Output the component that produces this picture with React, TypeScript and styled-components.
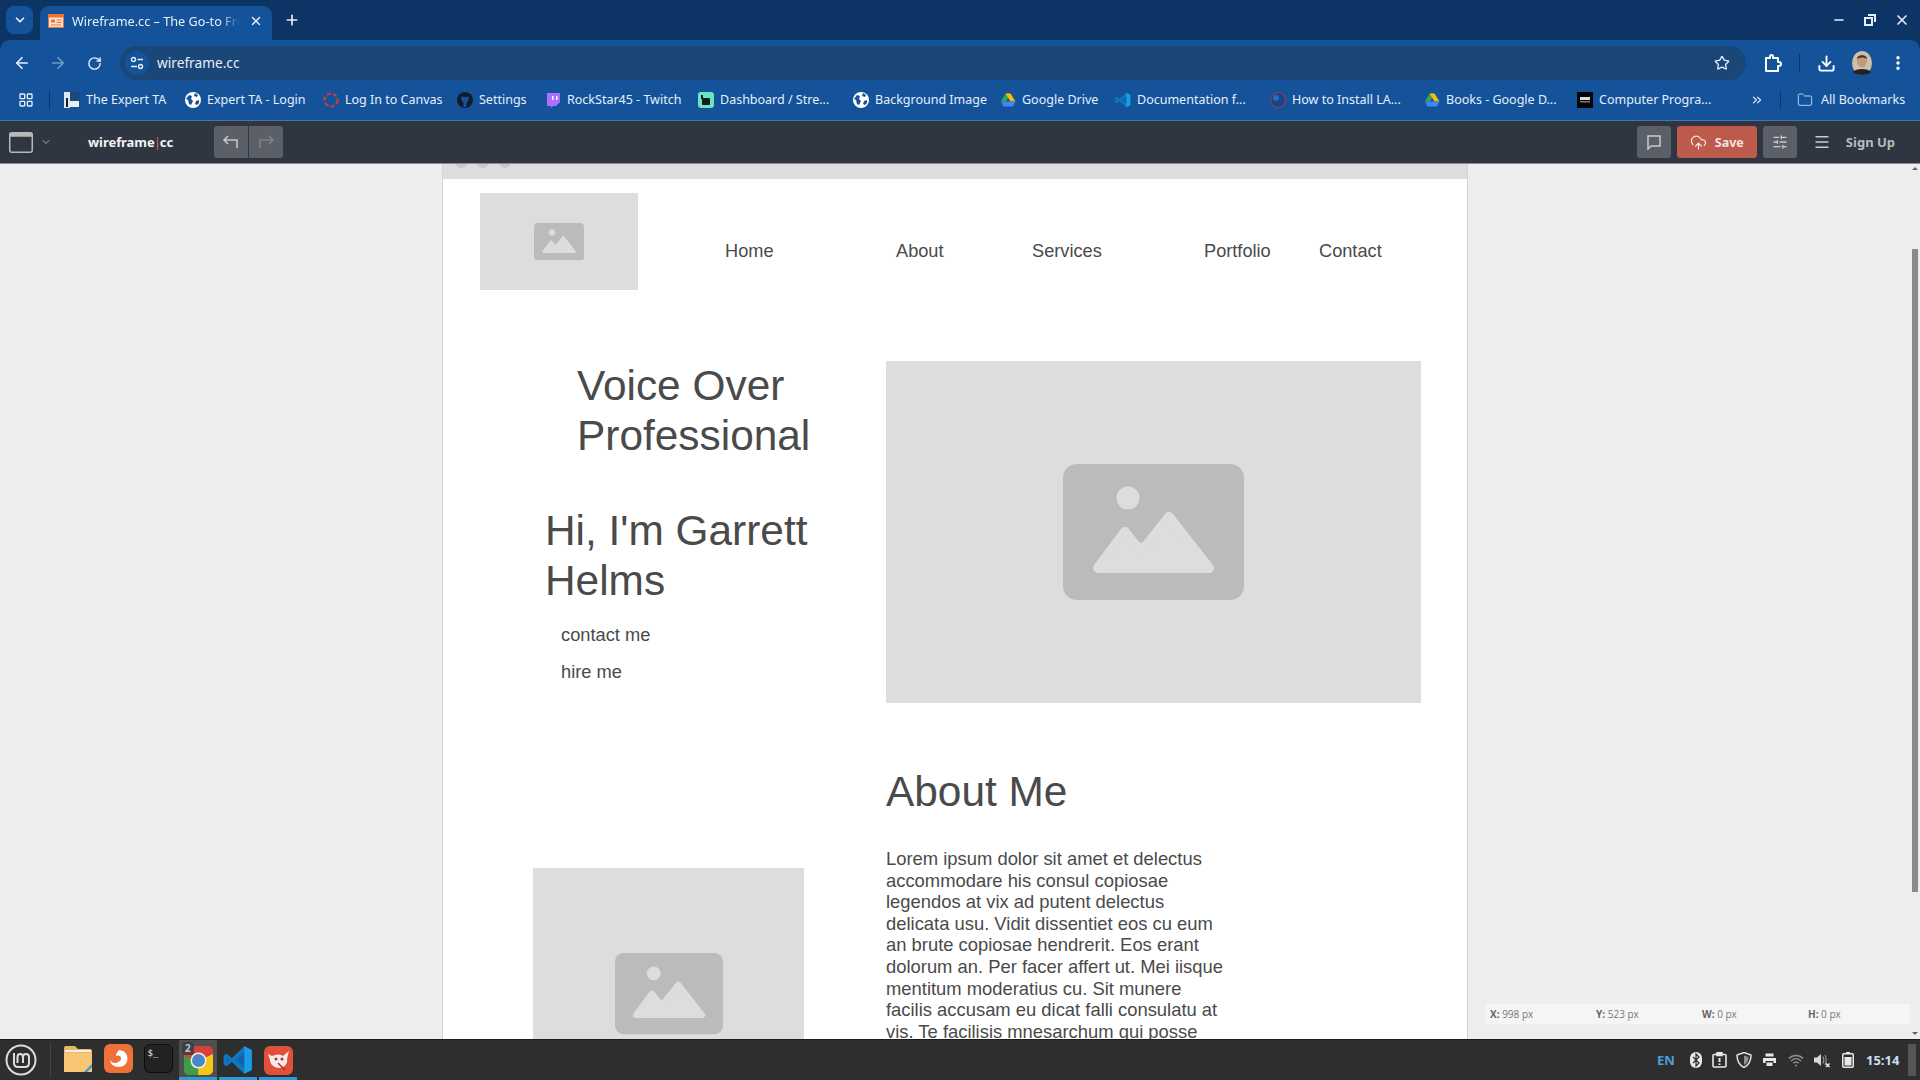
import styled, { createGlobalStyle } from 'styled-components';
import {
  ArrowLeft,
  ArrowRight,
  ChevronDown,
  ChevronsRight,
  CloudUpload,
  Download,
  EllipsisVertical,
  Folder,
  LayoutGrid,
  Menu,
  Minus,
  Plus,
  RotateCw,
  SlidersHorizontal,
  Star,
  X,
} from 'lucide-react';

const GlobalStyle = createGlobalStyle`
  html, body {
    margin: 0;
    padding: 0;
    overflow: hidden;
    background: #ededed;
  }
  * {
    box-sizing: border-box;
  }
`;

const Screen = styled.div`
  width: 1920px;
  height: 1080px;
  display: flex;
  flex-direction: column;
  overflow: hidden;
  font-family: 'Noto Sans', sans-serif;
  background: #0c3566;
`;

/* browser tabs */
const TabStrip = styled.div`
  height: 40px;
  flex: none;
  display: flex;
  align-items: flex-end;
  padding-left: 6px;
  color: #e6eefa;
`;

const TabMenu = styled.div`
  width: 27px;
  height: 28px;
  margin-bottom: 6px;
  border-radius: 8px;
  background: #14539a;
  display: flex;
  align-items: center;
  justify-content: center;
`;

const Tab = styled.div`
  width: 232px;
  height: 34px;
  margin-left: 7px;
  padding: 0 9px 5px 8px;
  border-radius: 9px 9px 0 0;
  background: #14539a;
  display: flex;
  align-items: center;
  font-size: 12.7px;
`;

const TabTitle = styled.span`
  width: 168px;
  margin: 0 auto 0 8px;
  white-space: nowrap;
  overflow: hidden;
  -webkit-mask-image: linear-gradient(to right, #000 88%, transparent);
  mask-image: linear-gradient(to right, #000 88%, transparent);
`;

const NewTab = styled.div`
  margin: 0 0 12px 12px;
  display: flex;
`;

const WindowControls = styled.div`
  margin: 0 10px 12px auto;
  display: flex;
  align-items: center;
  gap: 18px;
`;

/* address bar */
const Toolbar = styled.div`
  height: 40px;
  flex: none;
  display: flex;
  align-items: flex-end;
  background: #14539a;
  border-radius: 10px 10px 0 0;
  color: #e6eefa;
`;

const NavButton = styled.div<{ $dim?: boolean }>`
  width: 36px;
  height: 34px;
  display: flex;
  align-items: center;
  justify-content: center;
  opacity: ${(props) => (props.$dim ? 0.45 : 1)};
`;

const NavGroup = styled.div`
  display: flex;
  padding-left: 4px;
  margin-right: 8px;
`;

const Omnibox = styled.div`
  width: 1626px;
  height: 34px;
  padding: 0 16px 1px 5px;
  border-radius: 17px;
  background: #1b4678;
  display: flex;
  align-items: center;
  font-size: 13.7px;
`;

const SiteInfo = styled.div`
  width: 24px;
  height: 24px;
  margin-right: 8px;
  border-radius: 50%;
  background: #14539a;
  display: flex;
  align-items: center;
  justify-content: center;
`;

const OmniStar = styled.div`
  margin-left: auto;
  display: flex;
`;

const ToolIcons = styled.div`
  height: 34px;
  display: flex;
  align-items: center;
  padding-left: 18px;
`;

const ToolSeparator = styled.div`
  width: 1px;
  height: 18px;
  margin: 0 17px 0 17px;
  background: #0c3566;
`;

const Avatar = styled.svg`
  margin-left: 16px;
  margin-right: 17px;
`;

/* bookmarks */
const BookmarkBar = styled.div`
  height: 41px;
  flex: none;
  display: flex;
  align-items: center;
  padding-bottom: 1px;
  background: #14539a;
  border-bottom: 1px solid #3d78b5;
  color: #e6eefa;
  font-size: 12.5px;
`;

const AppsButton = styled.div`
  width: 49px;
  padding-left: 18px;
  display: flex;
`;

const BarSeparator = styled.div`
  width: 1px;
  height: 18px;
  background: #0c3566;
  flex: none;
`;

const Bookmark = styled.div<{ $width: number }>`
  width: ${(props) => props.$width}px;
  flex: none;
  display: flex;
  align-items: center;
  gap: 6px;
  white-space: nowrap;
  svg {
    flex: none;
  }
`;

const BookmarkStart = styled.div`
  width: 14px;
  flex: none;
`;

const BookmarkMore = styled.div`
  width: 30px;
  margin-left: -7px;
  flex: none;
  display: flex;
`;

const AllBookmarks = styled.div`
  margin-left: 16px;
  display: flex;
  align-items: center;
  gap: 8px;
  white-space: nowrap;
`;

/* wireframe.cc toolbar */
const EditorBar = styled.div`
  height: 43px;
  flex: none;
  display: flex;
  align-items: center;
  background: #2f3541;
  color: #fff;
  padding: 0 25px 0 9px;
  border-bottom: 1px solid #8b8d90;
`;

const WindowIcon = styled.svg`
  flex: none;
`;

const ChevronSlot = styled.div`
  display: flex;
  margin-left: 7px;
  color: #aaa;
`;

const Brand = styled.div`
  width: 126px;
  margin-left: 36px;
  font-weight: 700;
  font-size: 13px;
  letter-spacing: -0.05px;
  color: #f3f3f3;
  i {
    font-style: normal;
    font-weight: 400;
    color: #e2614e;
    margin: 0 -1px;
  }
`;

const HistoryGroup = styled.div`
  display: flex;
  gap: 1px;
  border-radius: 3px;
  overflow: hidden;
`;

const HistoryButton = styled.div<{ $dim?: boolean }>`
  width: 34px;
  height: 32px;
  background: #5b5f68;
  color: ${(props) => (props.$dim ? '#7f838a' : '#c4c6c9')};
  display: flex;
  align-items: center;
  justify-content: center;
`;

const EditorActions = styled.div`
  margin-left: auto;
  display: flex;
  align-items: center;
  gap: 6px;
`;

const SquareButton = styled.div`
  width: 34px;
  height: 32px;
  border-radius: 3px;
  background: #5b5f68;
  color: #c9cbce;
  display: flex;
  align-items: center;
  justify-content: center;
`;

const SaveButton = styled.div`
  width: 80px;
  height: 32px;
  border-radius: 3px;
  background: #bc5a4c;
  color: #f2e3e0;
  font-size: 12.5px;
  font-weight: 700;
  display: flex;
  align-items: center;
  justify-content: center;
  gap: 8px;
`;

const MenuSlot = styled.div`
  display: flex;
  margin: 0 0 0 10px;
  color: #c9cbce;
`;

const SignUp = styled.div`
  margin-left: 9px;
  font-size: 13px;
  font-weight: 700;
  color: #b9bbbe;
`;

/* page area */
const Workspace = styled.div`
  position: relative;
  flex: 1;
  min-height: 0;
  padding-left: 442px;
  background: #ededed;
  overflow: hidden;
`;

const Canvas = styled.div`
  width: 1026px;
  height: 100%;
  background: #fff;
  border-left: 1px solid #d4d4d4;
  border-right: 1px solid #d4d4d4;
  overflow: hidden;
  font-family: 'Liberation Sans', Arial, sans-serif;
  color: #4a4a4a;
`;

const TitleBar = styled.div`
  height: 15px;
  display: flex;
  gap: 10px;
  padding-left: 12px;
  background: #ddd;
  overflow: hidden;
`;

const TitleDot = styled.div`
  width: 12px;
  height: 12px;
  margin-top: -8px;
  border-radius: 50%;
  background: #c8c8c8;
`;

const SiteHeader = styled.div`
  display: flex;
  padding: 14px 0 0 37px;
`;

const SiteNav = styled.nav`
  display: flex;
  align-items: center;
  height: 97px;
  padding: 20px 0 0 87px;
  font-size: 18.2px;
`;

const NavItem = styled.div<{ $width: number }>`
  width: ${(props) => props.$width}px;
`;

const Placeholder = styled.div<{ $width: number; $height: number }>`
  width: ${(props) => props.$width}px;
  height: ${(props) => props.$height}px;
  flex: none;
  background: #ddd;
  display: flex;
  align-items: center;
  justify-content: center;
`;

const Hero = styled.section`
  display: flex;
  margin-top: 71px;
`;

const HeroText = styled.div`
  width: 443px;
  flex: none;
`;

const BigTitle = styled.h1<{ $indent: number; $gap?: number }>`
  margin: ${(props) => props.$gap ?? 0}px 0 0;
  padding-left: ${(props) => props.$indent}px;
  font-size: 42.4px;
  line-height: 50px;
  font-weight: 400;
`;

const HeroLinks = styled.div`
  margin-top: 18px;
  padding-left: 118px;
  font-size: 18.3px;
  line-height: 21px;
  display: flex;
  flex-direction: column;
  gap: 16px;
`;

const About = styled.section`
  display: flex;
  margin-top: 64px;
`;

const AboutPhoto = styled.div`
  width: 443px;
  flex: none;
  padding: 101px 0 0 90px;
`;

const AboutBody = styled.p`
  width: 342px;
  margin: 31px 0 0;
  font-size: 18.4px;
  line-height: 21.6px;
`;

const InfoPanel = styled.div`
  position: absolute;
  left: 1486px;
  top: 840px;
  width: 424px;
  height: 20px;
  padding-left: 4px;
  background: #f5f5f5;
  display: grid;
  grid-template-columns: repeat(4, 106px);
  align-items: center;
  font-family: 'Open Sans', sans-serif;
  font-size: 10px;
  color: #777;
  b {
    font-weight: 700;
    color: #666;
  }
`;

const ScrollThumb = styled.div`
  position: absolute;
  left: 1912px;
  top: 85px;
  width: 6px;
  height: 643px;
  background: #8a8a8a;
`;

const ScrollArrow = styled.div<{ $down?: boolean }>`
  position: absolute;
  left: 1912px;
  ${(props) => (props.$down ? 'bottom: 4px;' : 'top: 3px;')}
  width: 0;
  height: 0;
  border-left: 3.5px solid transparent;
  border-right: 3.5px solid transparent;
  ${(props) => (props.$down ? 'border-top: 3px solid #666;' : 'border-bottom: 3px solid #666;')}
`;

/* desktop panel */
const Taskbar = styled.div`
  height: 41px;
  flex: none;
  display: flex;
  align-items: stretch;
  background: #2e2e2e;
  border-top: 1px solid #1c1c1c;
`;

const MintSlot = styled.div`
  width: 50px;
  padding-left: 5px;
  display: flex;
  align-items: center;
`;

const PanelSeparator = styled.div`
  width: 1px;
  margin: 2px 0;
  background: #444;
`;

const Launchers = styled.div`
  display: flex;
  margin-left: 8px;
  gap: 2px;
`;

const Launcher = styled.div<{ $open?: boolean; $active?: boolean }>`
  position: relative;
  width: 38px;
  display: flex;
  align-items: center;
  justify-content: center;
  background: ${(props) => (props.$active ? '#4f4f4f' : 'transparent')};
  border-bottom: 3px solid ${(props) => (props.$open ? '#2b9ad6' : 'transparent')};
  padding-top: ${(props) => (props.$open ? 3 : 0)}px;
`;

const Badge = styled.span`
  position: absolute;
  left: 3px;
  top: 2px;
  padding: 0 3px;
  border-radius: 3px;
  background: rgba(60, 60, 60, 0.85);
  color: #9fc8ec;
  font-size: 10px;
  font-weight: 700;
  line-height: 13px;
`;

const TerminalIcon = styled.div`
  width: 29px;
  height: 29px;
  border-radius: 6px;
  background: #232323;
  border: 1px solid #0d0d0d;
  color: #eee;
  font-family: 'DejaVu Sans Mono', monospace;
  font-size: 9px;
  line-height: 12px;
  padding: 2px 3px;
`;

const Tray = styled.div`
  margin-left: auto;
  display: flex;
  align-items: center;
  color: #e0e0e0;
`;

const TrayIcon = styled.div<{ $width: number }>`
  width: ${(props) => props.$width}px;
  display: flex;
  justify-content: center;
`;

const TrayLang = styled.div`
  width: 18px;
  margin-right: 9px;
  font-size: 13px;
  font-weight: 700;
  color: #4b9fdc;
`;

const Clock = styled.div`
  width: 42px;
  margin-left: 5px;
  font-size: 13px;
  font-weight: 700;
  color: #c9dff2;
`;

const PanelHandle = styled.div`
  width: 8px;
  height: 32px;
  margin: 0 4px 0 0;
  background: #555;
`;

function ImageIcon({ width }: { width: number }) {
  return (
    <svg width={width} viewBox="0 0 181 136">
      <rect width="181" height="136" rx="14" fill="#bbb" />
      <circle cx="65" cy="34" r="11.5" fill="#ddd" />
      <path
        d="M35 104 L62 68 L73 82 Q78 86 83 82 L106 53 L146 104 Z"
        fill="#ddd"
        stroke="#ddd"
        strokeWidth="10"
        strokeLinejoin="round"
      />
    </svg>
  );
}

function TabIcon() {
  return (
    <svg width="16" height="16" viewBox="0 0 16 16">
      <rect x="0.5" y="1.5" width="15" height="13" fill="#fbe3d2" stroke="#f0703a" />
      <rect x="0.5" y="1.5" width="15" height="3" fill="#f0703a" />
      <rect x="3" y="6.5" width="4" height="3" fill="#f0703a" />
      <rect x="8.5" y="6.5" width="5" height="1" fill="#f0703a" />
      <rect x="8.5" y="9" width="5" height="1" fill="#f0703a" />
      <rect x="3" y="11.5" width="10" height="1" fill="#f0703a" />
    </svg>
  );
}

function DriveIcon() {
  return (
    <svg width="16" height="16" viewBox="0 0 16 16">
      <path d="M5.5 1.5h5L6 9.5H1z" fill="#2fa84f" />
      <path d="M5.5 1.5h5l5 8h-5z" fill="#fbbc04" />
      <path d="M1 9.5h14.5l-2.5 5H3.5z" fill="#4285f4" />
    </svg>
  );
}

function GlobeIcon() {
  return (
    <svg width="16" height="16" viewBox="0 0 16 16">
      <circle cx="8" cy="8" r="8" fill="#fff" />
      <path d="M1 7l3-4 3 1-1 3 2 2-2 4-2-1-1-4zM10 1l3 2-1 2-3-1zM11 9l3-1 0 3-2 2-2-1z" fill="#14539a" />
    </svg>
  );
}

function VsCodeIcon({ size }: { size: number }) {
  return (
    <svg width={size} height={size} viewBox="0 0 24 24">
      <path d="M17 1 L23 4 V20 L17 23 L7 13.5 L3 17 L0.5 15.5 V8.5 L3 7 L7 10.5 Z" fill="#0f78c2" />
      <path d="M17 1 L23 4 V20 L17 23 Z" fill="#1b9ce8" />
      <path d="M3 9.5 L5.5 12 L3 14.5 Z" fill="#14539a" opacity="0.6" />
      <path d="M10 12 L17 6.5 V17.5 Z" fill="#14539a" opacity="0.55" />
    </svg>
  );
}

const bookmarks = [
  { label: 'The Expert TA', width: 121, icon: <svg width="16" height="16" viewBox="0 0 16 16"><rect width="16" height="16" fill="#1a4a80" /><rect width="6" height="16" fill="#dfe7ef" /><rect x="2" y="6" width="2" height="9" fill="#123" /><rect x="6" y="9" width="9" height="6" fill="#e8eef5" /></svg> },
  { label: 'Expert TA - Login', width: 138, icon: <GlobeIcon /> },
  { label: 'Log In to Canvas', width: 134, icon: <svg width="16" height="16" viewBox="0 0 16 16"><circle cx="8" cy="8" r="6.5" fill="none" stroke="#e23a2e" strokeWidth="2" strokeDasharray="4 2.4" /></svg> },
  { label: 'Settings', width: 88, icon: <svg width="16" height="16" viewBox="0 0 16 16"><circle cx="8" cy="8" r="8" fill="#111c2b" /><path d="M4.5 4l2 1h3l2-1v3.5c0 2-1.5 3-3.5 3s-3.500-1-3.500-3z" fill="#14539a" /><rect x="6.500" y="10" width="3" height="5" fill="#14539a" /></svg> },
  { label: 'RockStar45 - Twitch', width: 153, icon: <svg width="16" height="16" viewBox="0 0 16 16"><path d="M2 1h13v9l-4 4H8l-2 2v-2H2z" fill="#a970ff" /><rect x="7" y="4" width="1.500" height="4" fill="#fff" /><rect x="11" y="4" width="1.500" height="4" fill="#fff" /></svg> },
  { label: 'Dashboard / Stre...', width: 155, icon: <svg width="16" height="16" viewBox="0 0 16 16"><rect width="16" height="16" rx="3" fill="#6fe3c1" /><rect x="4" y="6" width="8" height="7" rx="1" fill="#10201c" /><rect x="3" y="3" width="2" height="4" fill="#10201c" /></svg> },
  { label: 'Background Image', width: 147, icon: <GlobeIcon /> },
  { label: 'Google Drive', width: 115, icon: <DriveIcon /> },
  { label: 'Documentation f...', width: 155, icon: <VsCodeIcon size={16} /> },
  { label: 'How to Install LA...', width: 154, icon: <svg width="16" height="16" viewBox="0 0 16 16"><circle cx="8" cy="8" r="7.500" fill="#14478a" stroke="#b1344a" /><circle cx="6" cy="6" r="3" fill="#2a6ac0" /></svg> },
  { label: 'Books - Google D...', width: 153, icon: <DriveIcon /> },
  { label: 'Computer Progra...', width: 180, icon: <svg width="16" height="16" viewBox="0 0 16 16"><rect width="16" height="16" fill="#050505" /><rect x="3" y="5" width="10" height="3" fill="#ddd" /><rect x="3" y="9" width="10" height="1.500" fill="#777" /></svg> },
];

const navItems = [
  { label: 'Home', width: 171 },
  { label: 'About', width: 136 },
  { label: 'Services', width: 172 },
  { label: 'Portfolio', width: 115 },
  { label: 'Contact', width: 80 },
];

export default function App() {
  return (
    <Screen>
      <GlobalStyle />
      <TabStrip>
        <TabMenu>
          <ChevronDown size={14} strokeWidth={3} />
        </TabMenu>
        <Tab>
          <TabIcon />
          <TabTitle>Wireframe.cc – The Go-to Free Online</TabTitle>
          <X size={14} strokeWidth={2.5} />
        </Tab>
        <NewTab>
          <Plus size={16} strokeWidth={2.5} />
        </NewTab>
        <WindowControls>
          <Minus size={14} strokeWidth={2.5} />
          <svg width="12" height="12" viewBox="0 0 12 12" fill="none" stroke="#e6eefa" strokeWidth="2">
            <rect x="1" y="4" width="7" height="7" />
            <path d="M4 1h7v7" />
          </svg>
          <X size={16} strokeWidth={2.5} />
        </WindowControls>
      </TabStrip>

      <Toolbar>
        <NavGroup>
          <NavButton>
            <ArrowLeft size={18} strokeWidth={2.2} />
          </NavButton>
          <NavButton $dim>
            <ArrowRight size={18} strokeWidth={2.2} />
          </NavButton>
          <NavButton>
            <RotateCw size={15} strokeWidth={2.2} />
          </NavButton>
        </NavGroup>
        <Omnibox>
          <SiteInfo>
            <svg width="14" height="14" viewBox="0 0 14 14" fill="none" stroke="#e6eefa" strokeWidth="1.400">
              <circle cx="3.500" cy="3.500" r="2" />
              <path d="M7.500 3.500H13M1 10.500h6" />
              <circle cx="10.500" cy="10.500" r="2" />
            </svg>
          </SiteInfo>
          wireframe.cc
          <OmniStar>
            <Star size={16} strokeWidth={2} />
          </OmniStar>
        </Omnibox>
        <ToolIcons>
          <svg width="18" height="18" viewBox="0 0 18 18" fill="none" stroke="#fff" strokeWidth="2">
            <path d="M2 4h4V2.500a1.500 1.500 0 0 1 3 0V4h5v4h1a1.500 1.500 0 0 1 0 4h-1v5H2z" strokeLinejoin="round" />
          </svg>
          <ToolSeparator />
          <Download size={19} strokeWidth={2.4} color="#fff" />
          <Avatar width="20" height="24" viewBox="0 0 20 24">
            <ellipse cx="10" cy="12" rx="10" ry="12" fill="#cdbfa8" />
            <ellipse cx="10" cy="10" rx="5" ry="6.500" fill="#c49a7c" />
            <path d="M5 8c0-5 10-5 10 0-3-2-7-2-10 0z" fill="#4a3226" />
            <path d="M1 21c3-4 15-4 18 0-3 4-15 4-18 0z" fill="#222" />
          </Avatar>
          <EllipsisVertical size={18} strokeWidth={2.6} color="#fff" />
        </ToolIcons>
      </Toolbar>

      <BookmarkBar>
        <AppsButton>
          <LayoutGrid size={16} strokeWidth={2} />
        </AppsButton>
        <BarSeparator />
        <BookmarkStart />
        {bookmarks.map((bookmark) => (
          <Bookmark key={bookmark.label} $width={bookmark.width}>
            {bookmark.icon}
            {bookmark.label}
          </Bookmark>
        ))}
        <BookmarkMore>
          <ChevronsRight size={14} strokeWidth={2} />
        </BookmarkMore>
        <BarSeparator />
        <AllBookmarks>
          <Folder size={16} strokeWidth={1.5} color="#b9cde3" />
          All Bookmarks
        </AllBookmarks>
      </BookmarkBar>

      <EditorBar>
        <WindowIcon width="24" height="21" viewBox="0 0 24 21" fill="none">
          <rect x="0.750" y="0.750" width="22.500" height="19.500" rx="2" stroke="#b8b8b8" strokeWidth="1.500" />
          <rect x="0.750" y="0.750" width="22.500" height="4" fill="#b8b8b8" />
        </WindowIcon>
        <ChevronSlot>
          <ChevronDown size={12} />
        </ChevronSlot>
        <Brand>
          wireframe<i>|</i>cc
        </Brand>
        <HistoryGroup>
          <HistoryButton>
            <svg width="18" height="18" viewBox="0 0 18 18" fill="none" stroke="currentColor" strokeWidth="1.600">
              <path d="M6 3L2 7l4 4M2 7h13v8" />
            </svg>
          </HistoryButton>
          <HistoryButton $dim>
            <svg width="18" height="18" viewBox="0 0 18 18" fill="none" stroke="currentColor" strokeWidth="1.600">
              <path d="M12 3l4 4-4 4M16 7H3v8" />
            </svg>
          </HistoryButton>
        </HistoryGroup>
        <EditorActions>
          <SquareButton>
            <svg width="16" height="16" viewBox="0 0 16 16" fill="none" stroke="currentColor" strokeWidth="1.500">
              <path d="M2 2h12v10H5l-3 3z" />
            </svg>
          </SquareButton>
          <SaveButton>
            <CloudUpload size={17} strokeWidth={1.8} />
            Save
          </SaveButton>
          <SquareButton>
            <SlidersHorizontal size={16} strokeWidth={2} />
          </SquareButton>
          <MenuSlot>
            <Menu size={18} strokeWidth={1.8} />
          </MenuSlot>
          <SignUp>Sign Up</SignUp>
        </EditorActions>
      </EditorBar>

      <Workspace>
        <Canvas>
          <TitleBar>
            <TitleDot />
            <TitleDot />
            <TitleDot />
          </TitleBar>
          <SiteHeader>
            <Placeholder $width={158} $height={97}>
              <ImageIcon width={50} />
            </Placeholder>
            <SiteNav>
              {navItems.map((item) => (
                <NavItem key={item.label} $width={item.width}>
                  {item.label}
                </NavItem>
              ))}
            </SiteNav>
          </SiteHeader>
          <Hero>
            <HeroText>
              <BigTitle $indent={134}>
                Voice Over
                <br />
                Professional
              </BigTitle>
              <BigTitle as="h2" $indent={102} $gap={45}>
                Hi, I'm Garrett
                <br />
                Helms
              </BigTitle>
              <HeroLinks>
                <div>contact me</div>
                <div>hire me</div>
              </HeroLinks>
            </HeroText>
            <Placeholder $width={535} $height={342}>
              <ImageIcon width={181} />
            </Placeholder>
          </Hero>
          <About>
            <AboutPhoto>
              <Placeholder $width={271} $height={252}>
                <ImageIcon width={108} />
              </Placeholder>
            </AboutPhoto>
            <div>
              <BigTitle as="h2" $indent={0}>
                About Me
              </BigTitle>
              <AboutBody>
                Lorem ipsum dolor sit amet et delectus accommodare his consul copiosae legendos at vix ad putent
                delectus delicata usu. Vidit dissentiet eos cu eum an brute copiosae hendrerit. Eos erant dolorum an.
                Per facer affert ut. Mei iisque mentitum moderatius cu. Sit munere facilis accusam eu dicat falli
                consulatu at vis. Te facilisis mnesarchum qui posse
              </AboutBody>
            </div>
          </About>
        </Canvas>
        <InfoPanel>
          <div>
            <b>X:</b> 998 px
          </div>
          <div>
            <b>Y:</b> 523 px
          </div>
          <div>
            <b>W:</b> 0 px
          </div>
          <div>
            <b>H:</b> 0 px
          </div>
        </InfoPanel>
        <ScrollArrow />
        <ScrollThumb />
        <ScrollArrow $down />
      </Workspace>

      <Taskbar>
        <MintSlot>
          <svg width="32" height="32" viewBox="0 0 32 32" fill="none" stroke="#ddd">
            <circle cx="16" cy="16" r="14.500" strokeWidth="2" />
            <path
              d="M9 9v10c0 3 2 4 4 4h7c2 0 4-1 4-4v-6c0-2-1-3-3-3s-3 1-3 3v6M18 13c0-2-1-3-3-3s-2.500 1-2.500 3v6"
              strokeWidth="2"
            />
          </svg>
        </MintSlot>
        <PanelSeparator />
        <Launchers>
          <Launcher>
            <svg width="30" height="28" viewBox="0 0 30 28">
              <path d="M1 3a2 2 0 0 1 2-2h9l3 3h12a2 2 0 0 1 2 2v20H1z" fill="#e9b765" />
              <rect x="2" y="5" width="26" height="2" fill="#f3f1ea" />
              <path d="M1 8h28v19H1z" fill="#f7c573" />
              <path d="M21 27l8-8v3l-5 5z" fill="#2b9ad6" />
            </svg>
          </Launcher>
          <Launcher>
            <svg width="29" height="29" viewBox="0 0 29 29">
              <rect width="29" height="29" rx="6" fill="#f0703a" />
              <path
                d="M14.500 6c5 0 9 3.500 9 8.500s-4 8.500-9 8.500-8-3-8.500-7c1 2 3 3 5 3 3 0 5-2 5-4s-2-3-4-3c0-2 1-4 2.500-5z"
                fill="#fff"
              />
              <circle cx="14" cy="14.500" r="3" fill="#f0703a" />
            </svg>
          </Launcher>
          <Launcher>
            <TerminalIcon>$_</TerminalIcon>
          </Launcher>
          <Launcher $open $active>
            <svg width="29" height="29" viewBox="0 0 29 29">
              <rect width="29" height="29" rx="5" fill="#d8413a" />
              <path d="M14.500 14.500L29 8v16a5 5 0 0 1-5 5H14z" fill="#f5c518" />
              <path d="M0 10l14.500 4.500L14 29H5a5 5 0 0 1-5-5z" fill="#3f9c48" />
              <circle cx="14.500" cy="14.500" r="8" fill="#eee" />
              <circle cx="14.500" cy="14.500" r="6.500" fill="#4a86c8" />
            </svg>
            <Badge>2</Badge>
          </Launcher>
          <Launcher $open>
            <VsCodeIcon size={30} />
          </Launcher>
          <Launcher $open>
            <svg width="29" height="29" viewBox="0 0 29 29">
              <rect width="29" height="29" rx="6" fill="#e2503a" />
              <path d="M4 8l4 2c4-2 8-2 11 0l6-5-2 8c1 5-3 9-8 9s-9-4-9-8z" fill="#f6ebe6" />
              <circle cx="12" cy="13" r="1.500" fill="#a33" />
              <circle cx="18" cy="13" r="1.500" fill="#a33" />
              <path d="M14 17l7 7" stroke="#a33" strokeWidth="1.500" />
            </svg>
          </Launcher>
        </Launchers>
        <Tray>
          <TrayLang>EN</TrayLang>
          <TrayIcon $width={24}>
            <svg width="12" height="16" viewBox="0 0 12 16">
              <rect width="12" height="16" rx="6" fill="#e8e8e8" />
              <path d="M3 5l6 6-3 3V2l3 3-6 6" fill="none" stroke="#2e2e2e" strokeWidth="1.200" />
            </svg>
          </TrayIcon>
          <TrayIcon $width={23}>
            <svg width="15" height="16" viewBox="0 0 15 16" fill="none" stroke="#e8e8e8" strokeWidth="1.600">
              <rect x="1" y="2.500" width="13" height="12.500" rx="1" />
              <rect x="5" y="0.500" width="5" height="3" fill="#e8e8e8" />
              <path d="M7.500 6v4M7.500 11.500v1.500" strokeWidth="2" />
            </svg>
          </TrayIcon>
          <TrayIcon $width={25}>
            <svg width="16" height="16" viewBox="0 0 16 16">
              <path d="M8 .5l7 2.500c0 6-2 10-7 12.500C3 13 1 9 1 3z" fill="none" stroke="#e0e0e0" strokeWidth="1.500" />
              <path d="M8 3.500l4.500 1.500c0 4-1.500 6.500-4.500 8.300z" fill="#8f8f8f" />
            </svg>
          </TrayIcon>
          <TrayIcon $width={27}>
            <svg width="15" height="14" viewBox="0 0 15 14" fill="#e8e8e8">
              <rect x="3.500" y="0.500" width="8" height="3" />
              <path d="M1 5h13v5h-2.500V8h-8v2H1z" />
              <rect x="4.500" y="9.500" width="6" height="3.500" />
            </svg>
          </TrayIcon>
          <TrayIcon $width={25}>
            <svg width="16" height="13" viewBox="0 0 16 13" fill="none" stroke="#8f8f8f" strokeWidth="1.500">
              <path d="M.8 4.500c4-4 10.400-4 14.400 0M3 7c3-3 7-3 10 0M5.300 9.300c1.500-1.400 3.900-1.400 5.400 0" />
              <circle cx="8" cy="11.500" r="1" fill="#8f8f8f" stroke="none" />
            </svg>
          </TrayIcon>
          <TrayIcon $width={27}>
            <svg width="18" height="16" viewBox="0 0 18 16">
              <path d="M1 5.500h3L8 2v12L4 10.500H1z" fill="#d8d8d8" />
              <path d="M10 4.500c1 2 1 5 0 7M12 3c1.500 3 1.500 7 0 10" fill="none" stroke="#8f8f8f" strokeWidth="1.200" />
              <path d="M13 11.500l3.500 3.500M16.500 11.500L13 15" stroke="#e8e8e8" strokeWidth="1.500" />
            </svg>
          </TrayIcon>
          <TrayIcon $width={26}>
            <svg width="12" height="16" viewBox="0 0 12 16">
              <rect x="4" y="0" width="4" height="2" fill="#e8e8e8" />
              <rect x="0.750" y="1.750" width="10.500" height="13.500" rx="1" fill="none" stroke="#e8e8e8" strokeWidth="1.500" />
              <rect x="2.500" y="5" width="7" height="8.500" fill="#e8e8e8" />
            </svg>
          </TrayIcon>
          <Clock>15:14</Clock>
          <PanelHandle />
        </Tray>
      </Taskbar>
    </Screen>
  );
}
